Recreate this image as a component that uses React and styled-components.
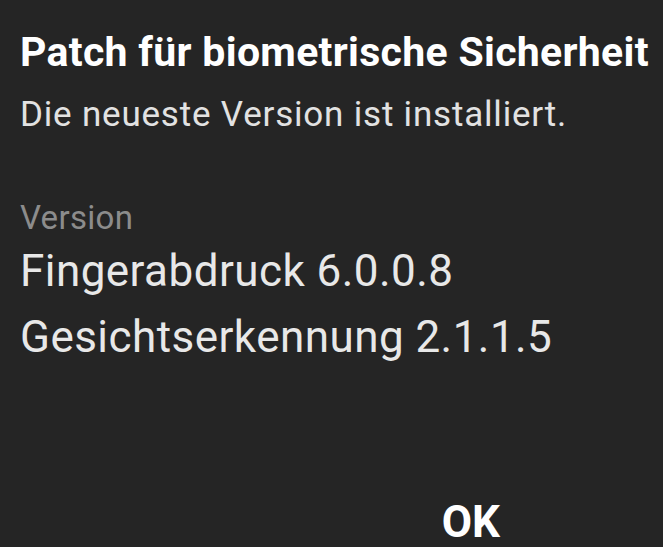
import React from 'react';
import styled, { createGlobalStyle } from 'styled-components';

const GlobalStyle = createGlobalStyle`
  html, body {
    margin: 0;
    padding: 0;
    background: #252525;
  }
  body {
    font-family: Roboto, "Noto Sans", sans-serif;
  }
`;

const Dialog = styled.div`
  width: 663px;
  height: 547px;
  box-sizing: border-box;
  padding: 28px 0 0 20px;
  background: #252525;
  display: flex;
  flex-direction: column;
  overflow: hidden;
`;

const Title = styled.h1`
  margin: 0;
  font-size: 41px;
  line-height: 48px;
  font-weight: 700;
  letter-spacing: 0.3px;
  color: #ffffff;
  white-space: nowrap;
`;

const Message = styled.p`
  margin: 18px 0 0;
  font-size: 35px;
  line-height: 42px;
  letter-spacing: 0.8px;
  color: #e2e2e2;
`;

const Label = styled.div`
  margin-top: 62px;
  font-size: 33px;
  line-height: 40px;
  letter-spacing: 0.3px;
  color: #8c8c8c;
`;

const VersionList = styled.div`
  display: flex;
  flex-direction: column;
`;

const VersionRow = styled.div`
  font-size: 44px;
  line-height: 66px;
  letter-spacing: 0.45px;
  color: #e8e8e8;
  white-space: nowrap;
`;

const Footer = styled.div`
  margin-top: auto;
  display: flex;
  justify-content: flex-end;
  padding-right: 163px;
`;

const Button = styled.button`
  border: none;
  background: none;
  padding: 0;
  font-family: inherit;
  font-size: 44px;
  line-height: 52px;
  font-weight: 700;
  color: #ffffff;
  margin-bottom: -1px;
`;

const versions = [
  { name: 'Fingerabdruck', value: '6.0.0.8' },
  { name: 'Gesichtserkennung', value: '2.1.1.5' },
];

export default function App() {
  return (
    <>
      <GlobalStyle />
      <Dialog>
        <Title>Patch für biometrische Sicherheit</Title>
        <Message>Die neueste Version ist installiert.</Message>
        <Label>Version</Label>
        <VersionList>
          {versions.map((v) => (
            <VersionRow key={v.name}>
              {v.name} {v.value}
            </VersionRow>
          ))}
        </VersionList>
        <Footer>
          <Button>OK</Button>
        </Footer>
      </Dialog>
    </>
  );
}
